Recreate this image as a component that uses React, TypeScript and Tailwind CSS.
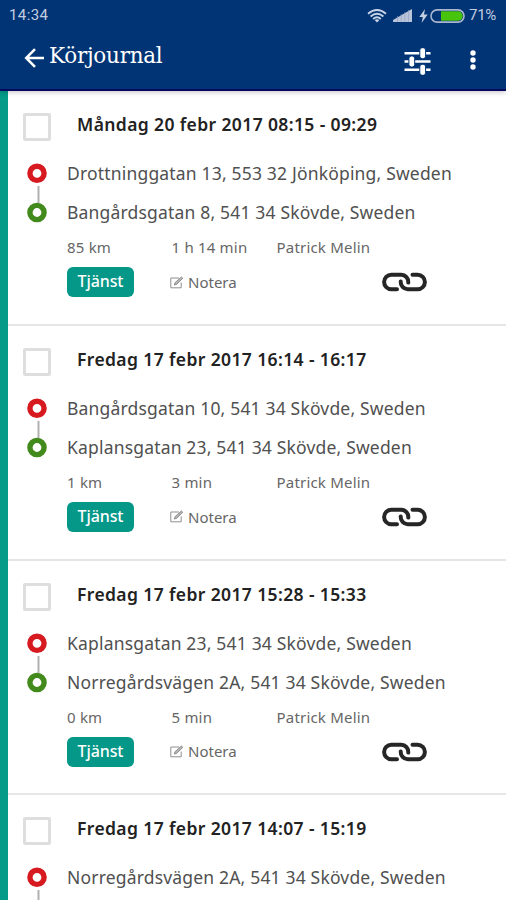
type Trip = {
    title: string;
    from: string;
    to?: string;
    distance?: string;
    duration?: string;
}

const DRIVER = "Patrick Melin";

const trips: Trip[] = [
    {
        title: "Måndag 20 febr 2017 08:15 - 09:29",
        from: "Drottninggatan 13, 553 32 Jönköping, Sweden",
        to: "Bangårdsgatan 8, 541 34 Skövde, Sweden",
        distance: "85 km",
        duration: "1 h 14 min",
    },
    {
        title: "Fredag 17 febr 2017 16:14 - 16:17",
        from: "Bangårdsgatan 10, 541 34 Skövde, Sweden",
        to: "Kaplansgatan 23, 541 34 Skövde, Sweden",
        distance: "1 km",
        duration: "3 min",
    },
    {
        title: "Fredag 17 febr 2017 15:28 - 15:33",
        from: "Kaplansgatan 23, 541 34 Skövde, Sweden",
        to: "Norregårdsvägen 2A, 541 34 Skövde, Sweden",
        distance: "0 km",
        duration: "5 min",
    },
    {
        title: "Fredag 17 febr 2017 14:07 - 15:19",
        from: "Norregårdsvägen 2A, 541 34 Skövde, Sweden",
    },
];

const WifiIcon = () => (
    <svg width="20" height="14" viewBox="0 0 20 14" fill="none" stroke="#c9d3e6" strokeWidth="1.9">
        <path d="M1 4.8 Q10 -2.6 19 4.8" />
        <path d="M3.6 7.5 Q10 2 16.4 7.5" />
        <path d="M6.2 10 Q10 6.6 13.8 10" />
        <path d="M7.6 11.1 Q10 9.2 12.4 11.1 L10 13.6 Z" fill="#c9d3e6" stroke="none" />
    </svg>
);

const SignalIcon = () => (
    <svg width="19" height="13" viewBox="0 0 19 13">
        <path d="M0 13 V11 L19 0 V13 Z" fill="#b9c4da" />
        <path d="M4.5 7 V13 M8.2 5 V13 M11.9 3 V13 M15.5 1 V13" stroke="#8f9fc0" strokeWidth="0.6" />
    </svg>
);

const BatteryIcon = () => (
    <svg width="35" height="14" viewBox="0 0 35 14">
        <rect x="1" y="0.9" width="33" height="12.2" rx="6.1" fill="#003474" stroke="#a9b5cf" strokeWidth="1.6" />
        <path d="M11 2.3 H28 A4.7 4.7 0 0 1 28 11.7 H11 Z" fill="#48c40c" />
    </svg>
);

const SlidersIcon = () => (
    <svg width="27" height="27" viewBox="0 0 27 27" fill="#fff">
        <path d="M0.5 4 H26.5 V6.4 H0.5 Z M0.5 12.3 H26.5 V14.7 H0.5 Z M0.5 20.6 H26.5 V23 H0.5 Z" />
        <g stroke="#003474" strokeWidth="1">
            <rect x="15.8" y="-0.3" width="5.8" height="11" rx="2.4" />
            <rect x="4.9" y="8" width="5.8" height="11" rx="2.4" />
            <rect x="15.8" y="16.3" width="5.8" height="11" rx="2.4" />
        </g>
    </svg>
);

const NoteIcon = () => (
    <svg width="14" height="13" viewBox="0 0 14 13" fill="none" stroke="#8f8f8f" strokeWidth="1">
        <path d="M9 2 H0.8 V11.8 H11.2 V6.5" />
        <path d="M4.3 9 L5 6.7 L11.4 1 L12.8 2.3 L6.6 8.4 Z" fill="#b5b5b5" />
    </svg>
);

const LinkIcon = () => (
    <svg width="45" height="20" viewBox="0 0 45 20" fill="none" stroke="#262626" strokeWidth="4" strokeLinecap="round">
        <path d="M15 17.2 H9.3 A7.2 7.2 0 0 1 9.3 2.8 H19.3 A7.2 7.2 0 0 1 26.3 10.6" />
        <path d="M30.5 2.8 H35.7 A7.2 7.2 0 0 1 35.7 17.2 H25.7 A7.2 7.2 0 0 1 18.7 9.6" />
    </svg>
);

const StatusBar = () => (
    <div className="flex h-[31px] items-center pl-[9px] pr-2 font-['Roboto',sans-serif] text-[15px] text-[#c3cde0]">
        <span className="flex-1 tracking-[0.4px]">14:34</span>
        <WifiIcon />
        <span className="ml-[6px]"><SignalIcon /></span>
        <svg className="ml-[7px]" width="9" height="14" viewBox="0 0 9 14" fill="#c3cde0">
            <path d="M6 0 L0.3 8 H3.8 L2.6 14 L8.7 5.6 H5 Z" />
        </svg>
        <span className="ml-[2px]"><BatteryIcon /></span>
        <span className="ml-[4px] w-[29px] whitespace-nowrap tracking-[-0.3px]">71%</span>
    </div>
);

const AppBar = () => (
    <div className="flex h-[59px] items-start text-white">
        <svg className="ml-6 mt-[17px]" width="21" height="20" viewBox="0 0 21 20" fill="none" stroke="#fff" strokeWidth="2.5">
            <path d="M20 10 H2.5 M11 1.2 L2.2 10 L11 18.8" />
        </svg>
        <h1 className="ml-1 mt-[10px] flex-1 whitespace-nowrap font-['DejaVu_Serif',serif] text-[21.5px] leading-[30px] tracking-[-0.25px]">
            Körjournal
        </h1>
        <span className="mr-[38px] mt-[17px]"><SlidersIcon /></span>
        <svg className="mr-[29px] mt-[19px]" width="8" height="20" viewBox="0 0 8 20" fill="#fff">
            <circle cx="4" cy="3" r="2.7" />
            <circle cx="4" cy="10" r="2.7" />
            <circle cx="4" cy="17" r="2.7" />
        </svg>
    </div>
);

// Start and end markers joined by a short line
const RouteMarkers = () => (
    <svg width="20" height="60" viewBox="0 0 20 60" fill="none">
        <path d="M11.5 23 V40" stroke="#b0b0b0" strokeWidth="2" />
        <circle cx="10" cy="10.3" r="7.1" stroke="#d71920" strokeWidth="5.4" />
        <circle cx="10" cy="49.5" r="7.1" stroke="#438a1c" strokeWidth="5.4" />
    </svg>
);

const TripDetails = ({ trip }: { trip: Trip }) => (
    <>
        <div className="ml-11 mt-2 grid grid-cols-[104.5px_105px_1fr] text-[15px] leading-[24px] tracking-[0.2px] text-[#666]">
            <span>{trip.distance}</span>
            <span>{trip.duration}</span>
            <span>{DRIVER}</span>
        </div>
        <div className="ml-11 mt-2 flex items-center text-[15px]">
            <button className="h-[30px] w-[67px] rounded-md bg-[#059788] pb-[2px] text-base font-medium tracking-[-0.1px] text-white">Tjänst</button>
            <span className="ml-[36px]"><NoteIcon /></span>
            <span className="ml-1 w-[194px] text-[#666]">Notera</span>
            <LinkIcon />
        </div>
    </>
);

const TripRow = ({ trip }: { trip: Trip }) => (
    <div className="h-[234.8px] shrink-0 border-b-2 border-[#e5e6e8] pl-[15px]">
        <div className="flex pt-[22px]">
            <div className="h-7 w-7 rounded-[2px] border-[3px] border-[#dedede] bg-white" />
            <h2 className="-mt-[1px] ml-[26px] whitespace-nowrap text-[17.5px] font-semibold leading-[24px] tracking-[0.38px] text-[#222]">{trip.title}</h2>
        </div>
        <div className="flex pl-1 pt-[22px]">
            <RouteMarkers />
            <div className="ml-5 -mt-[5px] flex flex-col whitespace-nowrap text-[17.5px] leading-[30px] tracking-[0.18px] text-[#505050]">
                <span>{trip.from}</span>
                {trip.to && <span className="mt-[9px]">{trip.to}</span>}
            </div>
        </div>
        {trip.to && <TripDetails trip={trip} />}
    </div>
);

const App = () => {
    return (
        <div className="h-[900px] w-[506px] overflow-hidden bg-white font-['Noto_Sans',sans-serif]">
            <header className="relative h-[91px] border-b-2 border-[#06075f] bg-[#003474] shadow-[0_1px_5px_rgba(0,0,0,0.25)]">
                <StatusBar />
                <AppBar />
            </header>
            <main className="flex h-[809px] flex-col overflow-hidden border-l-8 border-[#059b88]">
                {trips.map((trip) => <TripRow key={trip.title} trip={trip} />)}
            </main>
        </div>
    );
}

export default App;
